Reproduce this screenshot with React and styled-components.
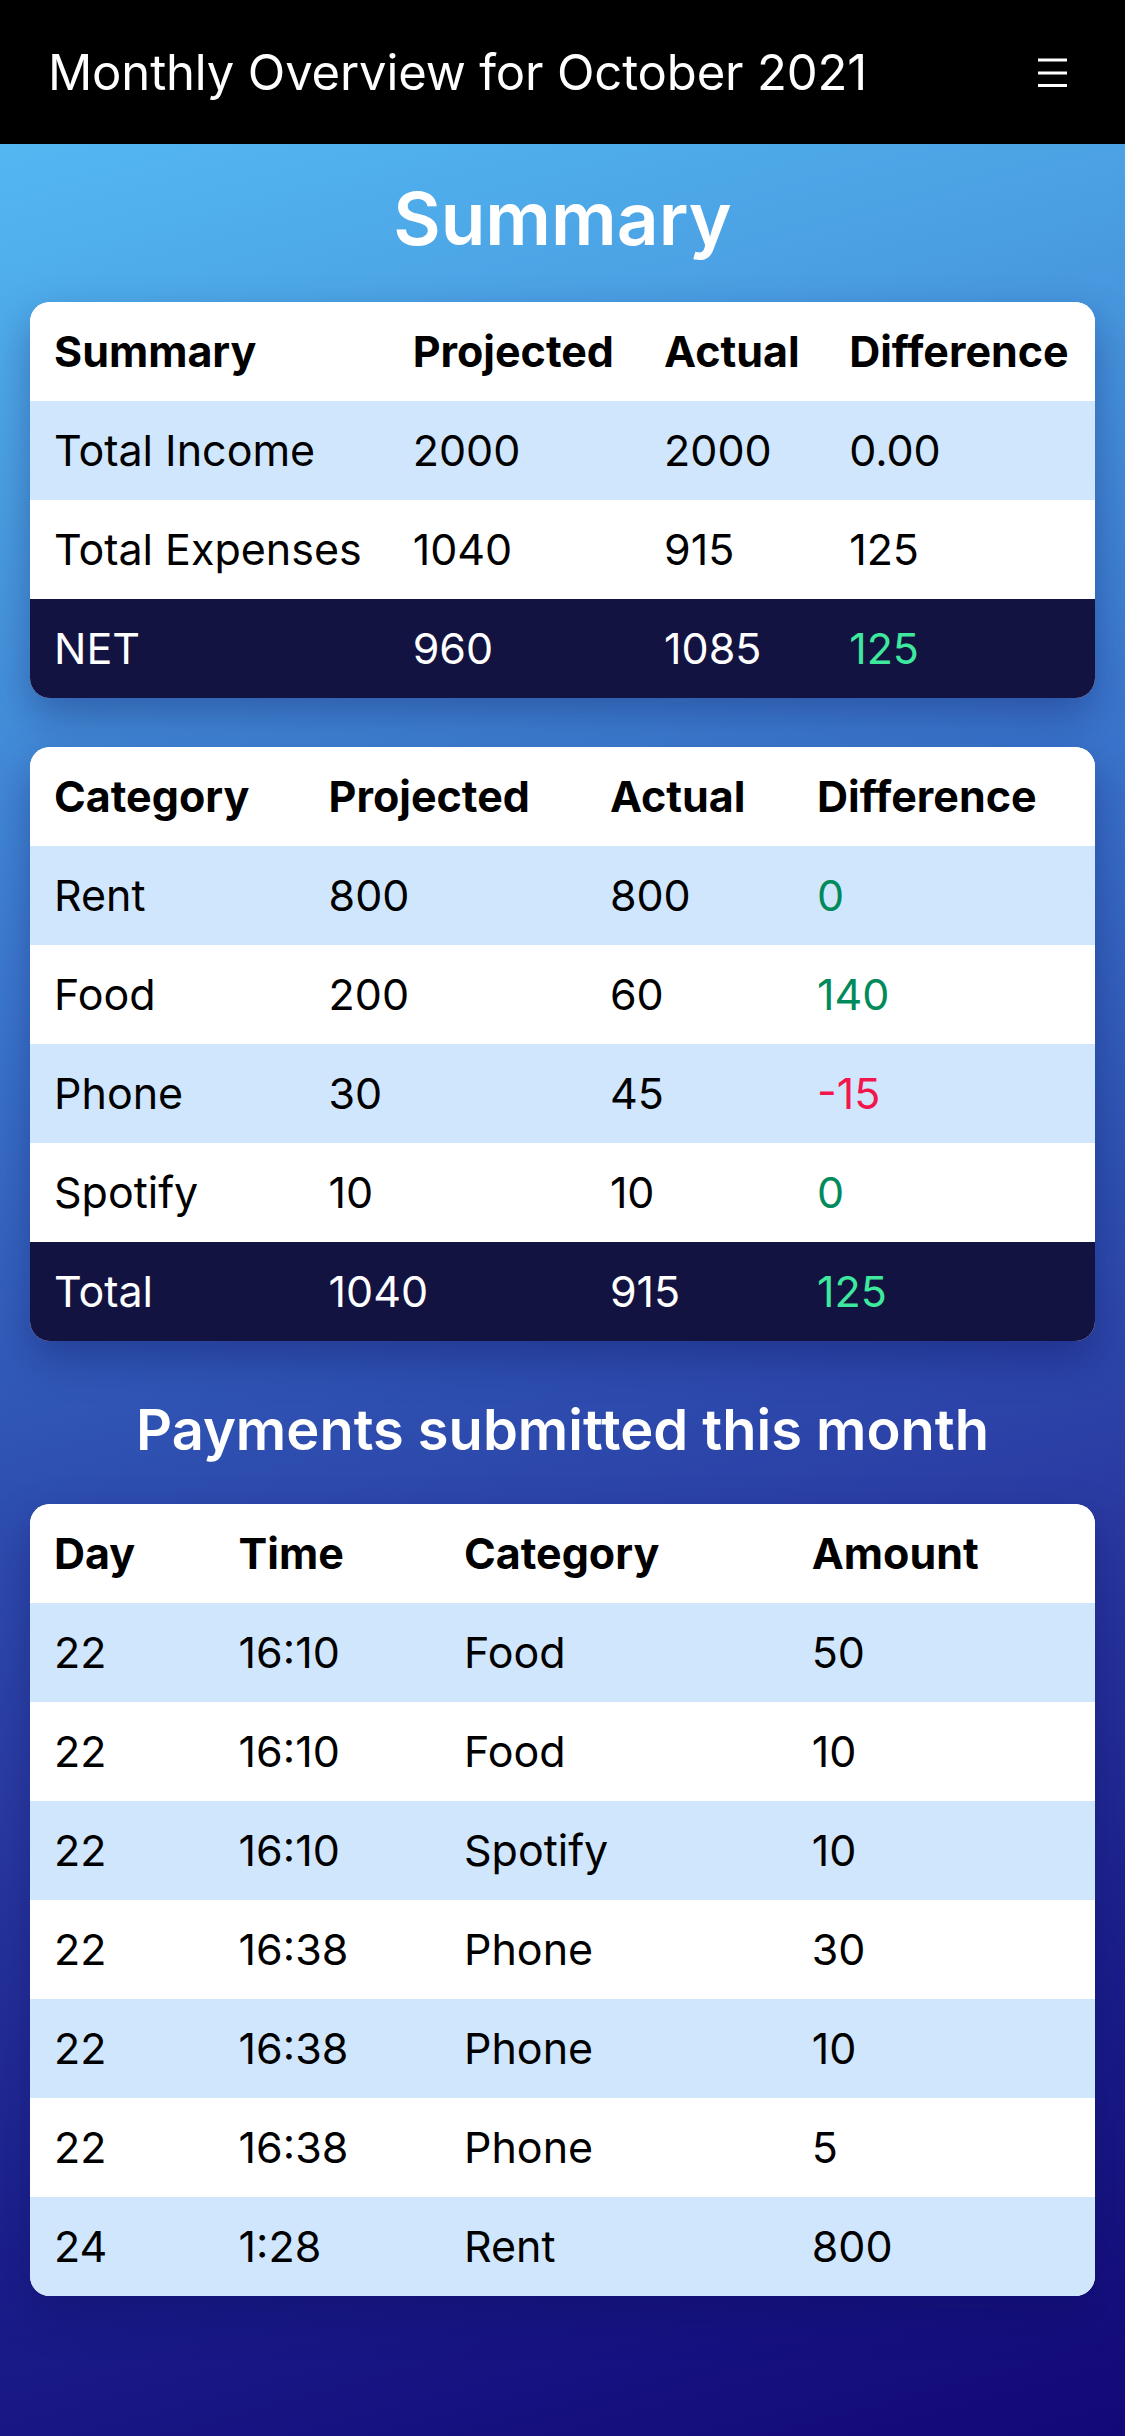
import React from "react";
import styled, { createGlobalStyle } from "styled-components";

const Global = createGlobalStyle`
  html, body { margin: 0; padding: 0; }
  body {
    font-family: Inter, "Noto Sans", "Liberation Sans", sans-serif;
    min-height: 2436px;
    background: linear-gradient(165deg, #57c1f9 0%, #4a9fe2 18%, #3a74cc 38%, #2e4fb0 55%, #2a3aa2 66%, #1b1f8c 82%, #130878 100%);
  }
  #root { min-height: 2436px; }
`;

const Header = styled.header`
  height: 144px;
  background: #000;
  display: flex;
  align-items: center;
  justify-content: space-between;
  padding: 0 56px 0 48px;
  box-sizing: border-box;
`;

const Title = styled.h2`
  margin: 0;
  color: #fff;
  font-weight: 400;
  font-size: 49px;
  letter-spacing: -0.15px;
`;

const MenuButton = styled.button`
  background: none;
  border: 0;
  padding: 0;
  width: 32px;
  height: 32px;
  display: flex;
  align-items: center;
  justify-content: center;
  cursor: pointer;
`;

const Main = styled.main`
  padding: 31px 30px 60px;
  display: flex;
  flex-direction: column;
`;

const Heading = styled.h1`
  margin: 0 0 ${(p) => p.$mb}px;
  text-align: center;
  color: #fff;
  font-weight: 600;
  font-size: ${(p) => p.$size}px;
  line-height: 1.2;
`;

const Card = styled.div`
  border-radius: 20px;
  overflow: hidden;
  background: #fff;
  box-shadow: 0 18px 40px rgba(12, 14, 90, 0.35);
  margin-bottom: ${(p) => p.$mb || 0}px;
`;

const Table = styled.table`
  width: 100%;
  border-collapse: collapse;
  font-size: 43px;
  color: #000;
`;

const Row = styled.tr`
  height: 99px;
  background: ${(p) => (p.$variant === "total" ? "#131342" : p.$variant === "alt" ? "#d0e6fc" : "#fff")};
  color: ${(p) => (p.$variant === "total" ? "#fff" : "#000")};
`;

const Th = styled.th`
  text-align: left;
  font-weight: 700;
  padding: 0 24px;
  white-space: nowrap;
`;

const Td = styled.td`
  padding: 0 24px;
  white-space: nowrap;
  color: ${(p) =>
    p.$tone === "pos" ? "#018a5b" : p.$tone === "neg" ? "#f2164d" : p.$tone === "posLight" ? "#3ee89c" : "inherit"};
`;

const Menu = () => (
  <svg width="30" height="30" viewBox="0 0 30 30" aria-hidden="true">
    <rect x="0" y="1.5" width="29" height="3" fill="#fff" />
    <rect x="0" y="14.5" width="29" height="3" fill="#fff" />
    <rect x="0" y="27" width="29" height="3" fill="#fff" />
  </svg>
);

const summaryRows = [
  ["Total Income", "2000", "2000", "0.00"],
  ["Total Expenses", "1040", "915", "125"],
];

const categoryRows = [
  ["Rent", "800", "800", "0", "pos"],
  ["Food", "200", "60", "140", "pos"],
  ["Phone", "30", "45", "-15", "neg"],
  ["Spotify", "10", "10", "0", "pos"],
];

const payments = [
  ["22", "16:10", "Food", "50"],
  ["22", "16:10", "Food", "10"],
  ["22", "16:10", "Spotify", "10"],
  ["22", "16:38", "Phone", "30"],
  ["22", "16:38", "Phone", "10"],
  ["22", "16:38", "Phone", "5"],
  ["24", "1:28", "Rent", "800"],
];

const HeadRow = ({ cols }) => (
  <Row>
    {cols.map((c) => (
      <Th key={c}>{c}</Th>
    ))}
  </Row>
);

export default function App() {
  return (
    <>
      <Global />
      <Header>
        <Title>Monthly Overview for October 2021</Title>
        <MenuButton aria-label="menu">
          <Menu />
        </MenuButton>
      </Header>
      <Main>
        <Heading $size={73} $mb={39}>Summary</Heading>
        <Card $mb={49}>
          <Table>
            <thead>
              <HeadRow cols={["Summary", "Projected", "Actual", "Difference"]} />
            </thead>
            <tbody>
              {summaryRows.map((r, i) => (
                <Row key={r[0]} $variant={i % 2 === 0 ? "alt" : ""}>
                  {r.map((c, j) => (
                    <Td key={j}>{c}</Td>
                  ))}
                </Row>
              ))}
              <Row $variant="total">
                <Td>NET</Td>
                <Td>960</Td>
                <Td>1085</Td>
                <Td $tone="posLight">125</Td>
              </Row>
            </tbody>
          </Table>
        </Card>
        <Card $mb={56}>
          <Table>
            <thead>
              <HeadRow cols={["Category", "Projected", "Actual", "Difference"]} />
            </thead>
            <tbody>
              {categoryRows.map((r, i) => (
                <Row key={r[0]} $variant={i % 2 === 0 ? "alt" : ""}>
                  <Td>{r[0]}</Td>
                  <Td>{r[1]}</Td>
                  <Td>{r[2]}</Td>
                  <Td $tone={r[4]}>{r[3]}</Td>
                </Row>
              ))}
              <Row $variant="total">
                <Td>Total</Td>
                <Td>1040</Td>
                <Td>915</Td>
                <Td $tone="posLight">125</Td>
              </Row>
            </tbody>
          </Table>
        </Card>
        <Heading $size={56} $mb={40}>Payments submitted this month</Heading>
        <Card>
          <Table>
            <thead>
              <HeadRow cols={["Day", "Time", "Category", "Amount"]} />
            </thead>
            <tbody>
              {payments.map((r, i) => (
                <Row key={i} $variant={i % 2 === 0 ? "alt" : ""}>
                  {r.map((c, j) => (
                    <Td key={j}>{c}</Td>
                  ))}
                </Row>
              ))}
            </tbody>
          </Table>
        </Card>
      </Main>
    </>
  );
}
